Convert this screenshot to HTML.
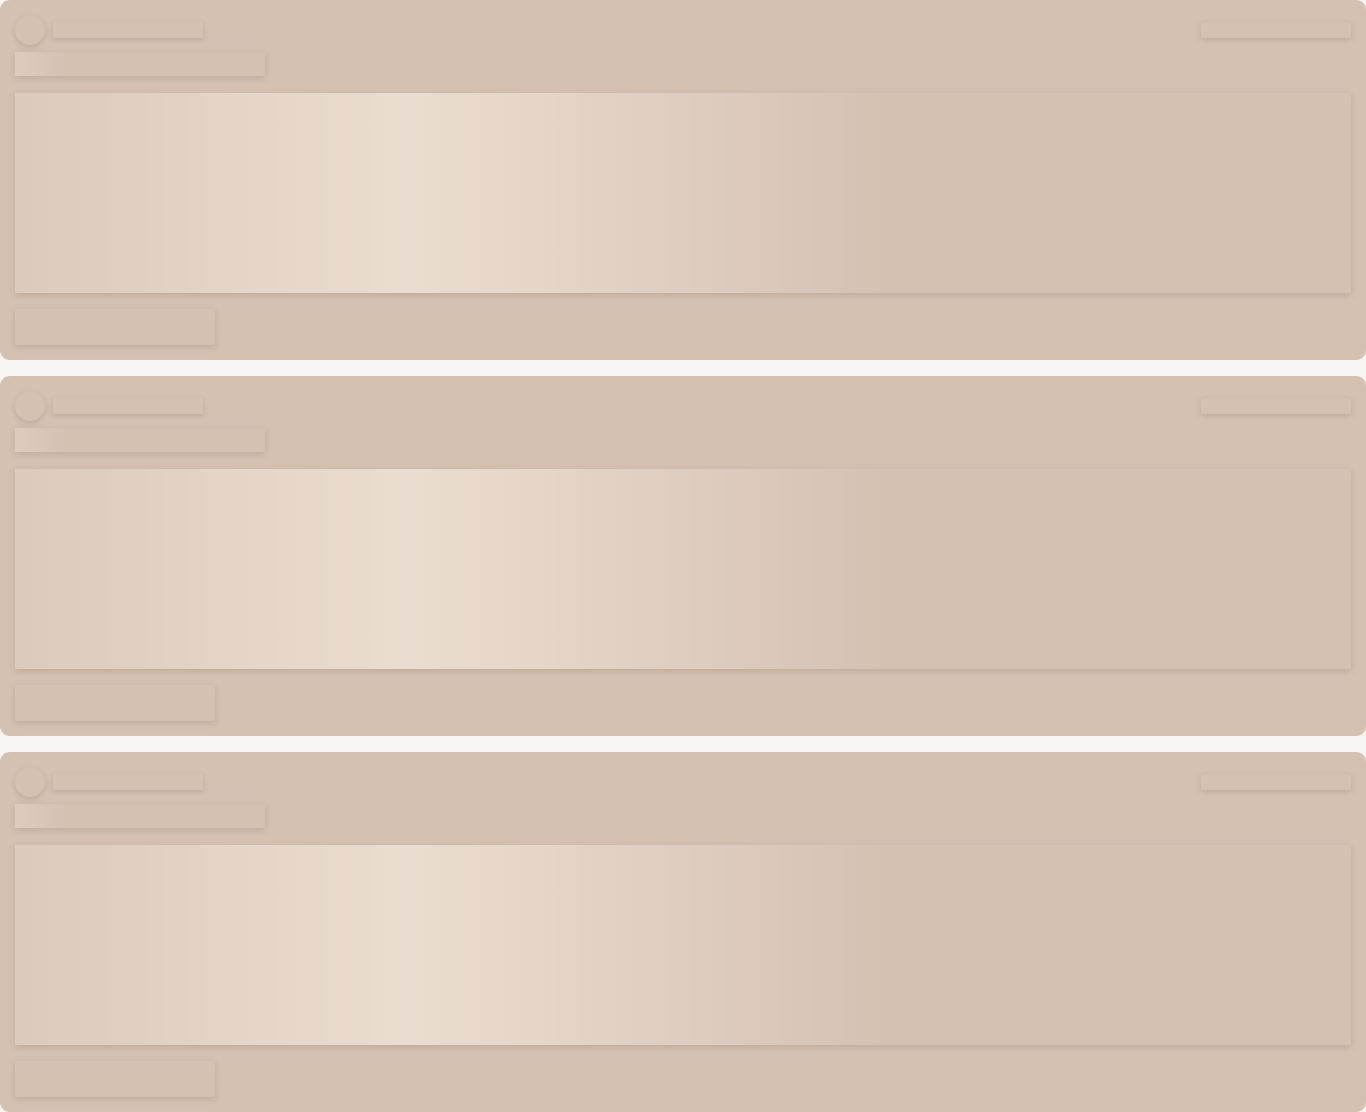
<!DOCTYPE html>
<html><head><style>
*{margin:0;padding:0;box-sizing:border-box}
body{width:1366px;height:1112px;background:#f8f4f1;overflow:hidden}
.card{position:absolute;left:0;width:1366px;height:360px;background:#d4c1b2;border-radius:10px}
.e{position:absolute;background:#d4c1b2;box-shadow:0 2px 6px rgba(120,90,70,.22)}
.c{left:15px;top:15px;width:30px;height:30px;border-radius:50%}
.b1{left:53px;top:22px;width:150px;height:16px}
.b2{left:1201px;top:22px;width:150px;height:16px}
.t{left:15px;top:52px;width:250px;height:24px;background:linear-gradient(90deg,#ddcbbd 0px,#d4c1b2 50px)}
.blk{left:15px;top:93px;width:1336px;height:200px;background:linear-gradient(90deg,#dccabc 0px,#e3d4c6 200px,#eadcd0 390px,#e5d6c8 520px,#dccabd 720px,#d4c1b2 870px)}
.btn{left:15px;top:309px;width:200px;height:36px}
</style></head><body>
<div class="card" style="top:0"><div class="e c"></div><div class="e b1"></div><div class="e b2"></div><div class="e t"></div><div class="e blk"></div><div class="e btn"></div></div>
<div class="card" style="top:376px"><div class="e c"></div><div class="e b1"></div><div class="e b2"></div><div class="e t"></div><div class="e blk"></div><div class="e btn"></div></div>
<div class="card" style="top:752px"><div class="e c"></div><div class="e b1"></div><div class="e b2"></div><div class="e t"></div><div class="e blk"></div><div class="e btn"></div></div>
</body></html>
